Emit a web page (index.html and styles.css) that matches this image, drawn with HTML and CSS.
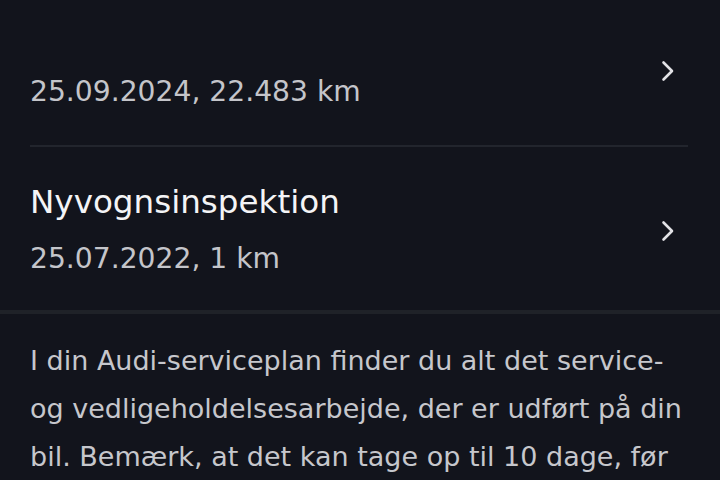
FILE: index.html
```html
<!DOCTYPE html>
<html lang="da">
<head>
<meta charset="utf-8">
<link rel="stylesheet" href="styles.css">
</head>
<body>
<div class="screen">
  <ul class="history">
    <li class="entry entry--first">
      <div class="entry__text">
        <div class="entry__title entry__title--hidden"></div>
        <div class="entry__meta">25.09.2024, 22.483 km</div>
      </div>
      <svg class="chevron" viewBox="0 0 14 22" width="14" height="22"><polyline points="2.5,2.5 11,11 2.5,19.5"/></svg>
    </li>
    <li class="entry entry--last">
      <div class="entry__text">
        <div class="entry__title">Nyvognsinspektion</div>
        <div class="entry__meta">25.07.2022, 1 km</div>
      </div>
      <svg class="chevron" viewBox="0 0 14 22" width="14" height="22"><polyline points="2.5,2.5 11,11 2.5,19.5"/></svg>
    </li>
  </ul>
  <div class="divider"></div>
  <p class="note">I din Audi-serviceplan finder du alt det service- og vedligeholdelsesarbejde, der er udført på din bil. Bemærk, at det kan tage op til 10 dage, før</p>
</div>
</body>
</html>
```
FILE: styles.css
```css
html, body {
  margin: 0;
  padding: 0;
  background: #12141c;
}
body {
  width: 720px;
  height: 480px;
  overflow: hidden;
  font-family: "DejaVu Sans", "Open Sans", sans-serif;
}
.screen {
  display: flex;
  flex-direction: column;
}
.history {
  list-style: none;
  margin: 0 32px 0 30px;
  padding: 0;
}
.entry {
  display: flex;
  align-items: center;
  justify-content: space-between;
  padding-right: 13px;
}
.entry--first {
  padding-top: 27px;
  padding-bottom: 31px;
  border-bottom: 2px solid #22252d;
}
.entry--last {
  padding-top: 33px;
  padding-bottom: 29px;
}
.entry__text {
  display: flex;
  flex-direction: column;
  gap: 13px;
}
.entry__title {
  font-size: 32.6px;
  line-height: 44px;
  color: #f4f4f6;
}
.entry__title--hidden {
  height: 30px;
}
.entry__meta {
  font-size: 28.2px;
  line-height: 44px;
  color: #c4c5ca;
}
.chevron {
  fill: none;
  stroke: #e2e2e6;
  stroke-width: 2.6;
  stroke-linecap: round;
  stroke-linejoin: round;
}
.divider {
  height: 4px;
  background: #1f2228;
}
.note {
  margin: 0;
  padding: 23px 30px 0 30px;
  font-size: 27px;
  line-height: 48px;
  color: #c6c7cc;
}
```
